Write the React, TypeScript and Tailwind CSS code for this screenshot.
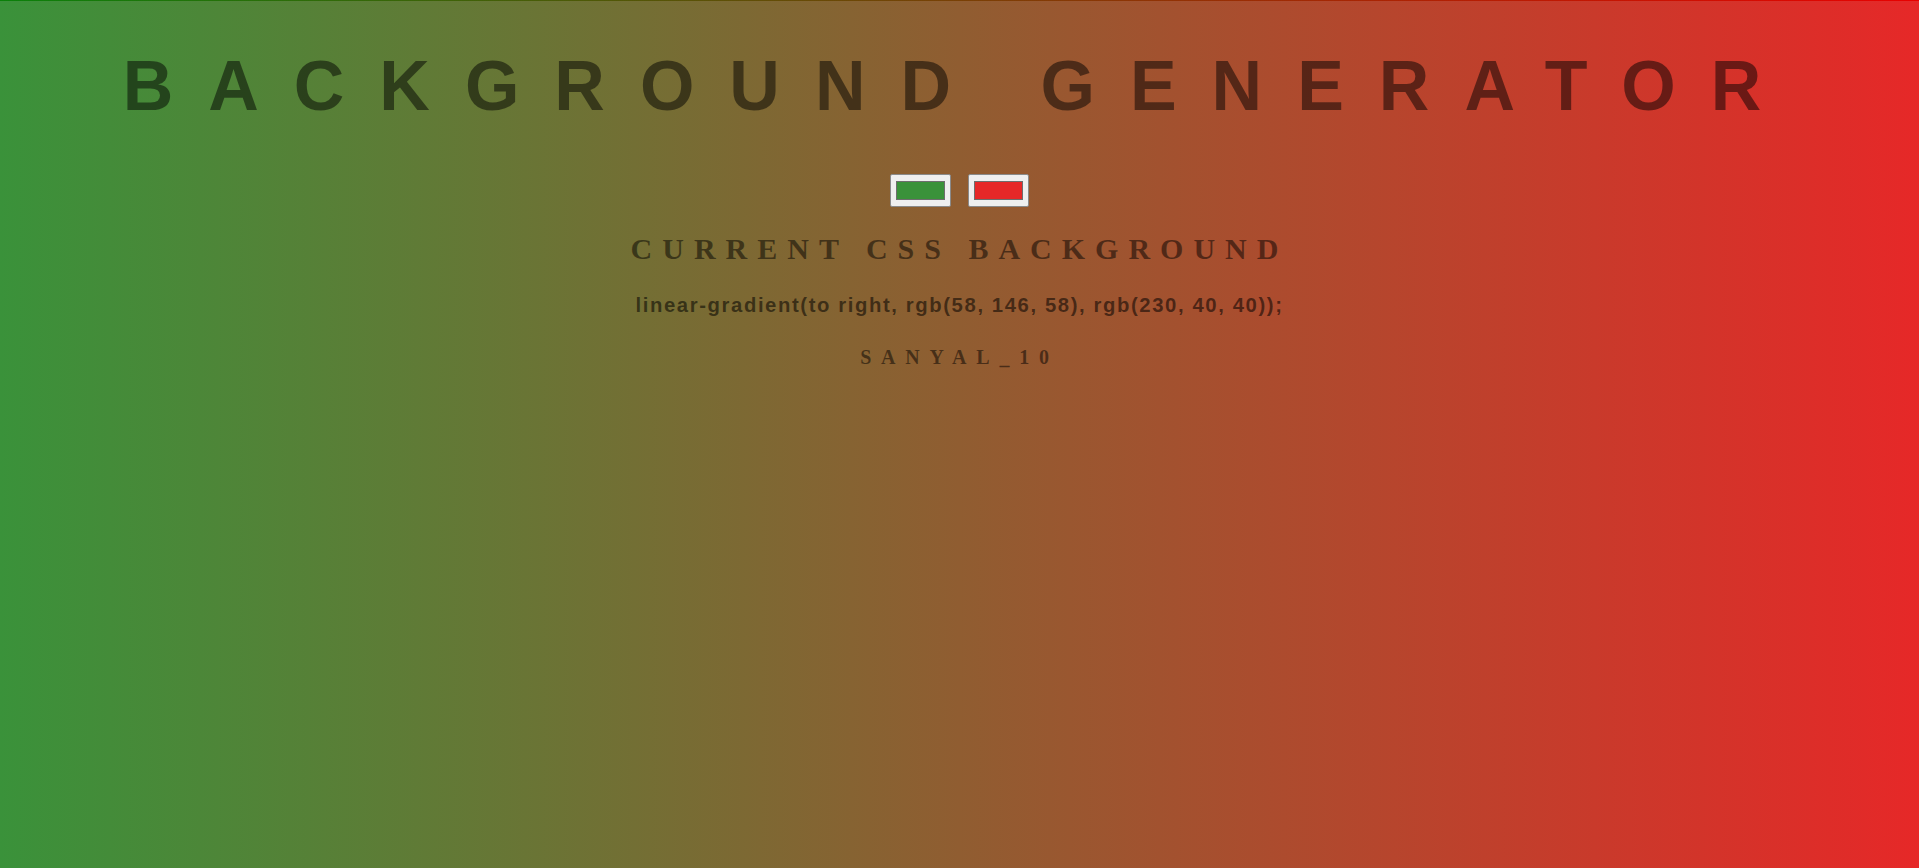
const colors = ["#3a923a", "#e62828"];

function Swatch({ color }: { color: string }) {
  return (
    <div className="flex h-[33px] w-[61px] items-center justify-center rounded-[2px] border border-[#8a8a8a] bg-[#efefef]">
      <div className="h-[19px] w-[49px] border border-[#6e6e6e]" style={{ backgroundColor: color }} />
    </div>
  );
}

export default function App() {
  return (
    <div className="flex h-[868px] w-full flex-col items-center bg-[linear-gradient(to_right,rgb(58,146,58),rgb(230,40,40))] text-black/50">
      <div className="h-px w-full bg-[linear-gradient(to_right,#0a800a,#e80000)]" />

      {/* title */}
      <h1 className="mt-[45px] font-['Liberation_Sans',Arial,sans-serif] text-[70px] leading-[80px] font-bold tracking-[35px] whitespace-nowrap">
        BACKGROUND GENERATOR
      </h1>

      <div className="mt-[48px] flex gap-[17px]">
        {colors.map((c) => (
          <Swatch key={c} color={c} />
        ))}
      </div>

      <h3 className="mt-[25px] font-['Liberation_Serif','Times_New_Roman',serif] text-[30px] leading-[34px] font-bold tracking-[10px] whitespace-nowrap">
        CURRENT CSS BACKGROUND
      </h3>

      <p className="mt-[28px] font-['Liberation_Sans',Arial,sans-serif] text-[20.3px] leading-[23px] font-bold tracking-[1.6px] whitespace-nowrap text-black/55">
        linear-gradient(to right, rgb(58, 146, 58), rgb(230, 40, 40));
      </p>

      <p className="mt-[29px] font-['Liberation_Serif','Times_New_Roman',serif] text-[20px] leading-[23px] font-bold tracking-[9.8px] whitespace-nowrap">
        SANYAL_10
      </p>
    </div>
  );
}
